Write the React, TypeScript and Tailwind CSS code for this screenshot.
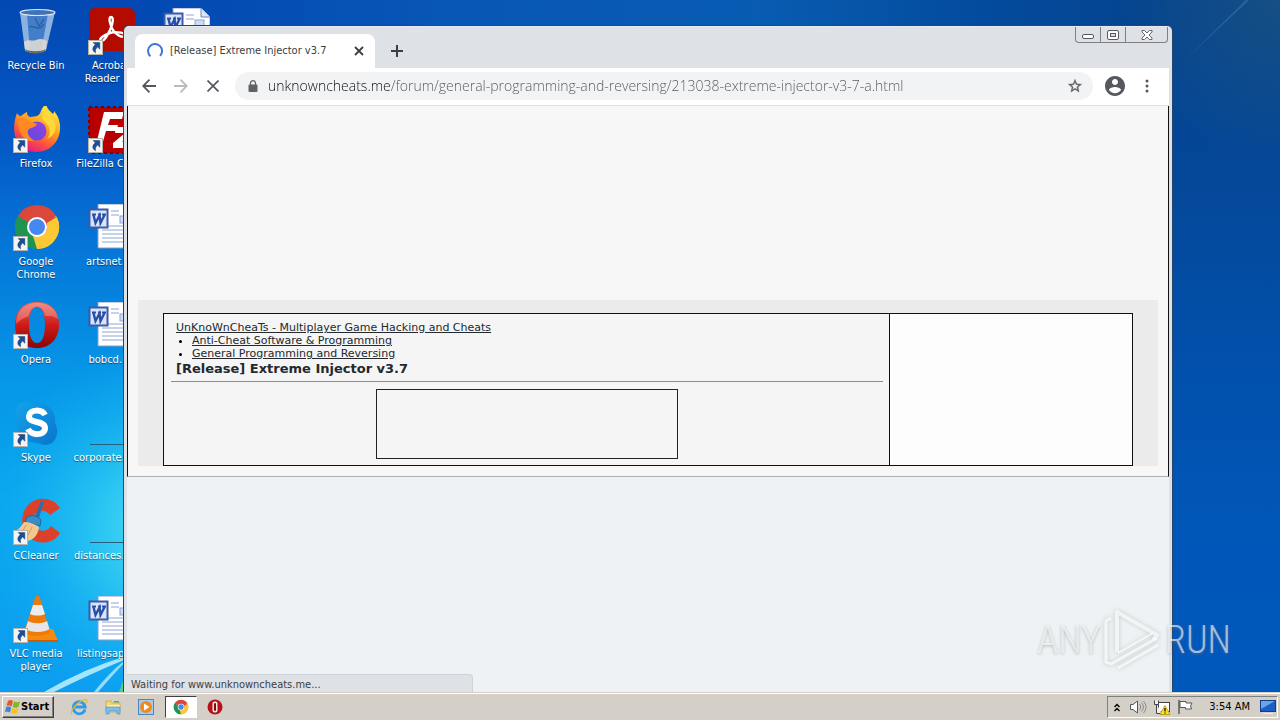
import type { ReactNode } from "react";

function Shortcut() {
  return (
    <g transform="translate(0 32)">
      <rect x=".5" y=".5" width="14" height="14" fill="#f4f4f2" stroke="#b9b2a8" />
      <path d="M5.2 2.6h6.6v6.6L9.7 7.1C7.6 8.6 7 10.3 7.6 12.8 4.4 11.2 3.6 7.6 7.3 4.8Z" fill="#1c4f96" stroke="#123a78" strokeWidth=".5" />
    </g>
  );
}

function Icon({ children, shortcut = true }: { children: ReactNode; shortcut?: boolean }) {
  return (
    <svg viewBox="-1 0 48 48" className="size-12 shrink-0" aria-hidden="true">
      {children}
      {shortcut && <Shortcut />}
    </svg>
  );
}

const Recycle = () => (
  <Icon shortcut={false}>
    <path d="M7 4 12 42c3 4 18 4 21 0L42 4Z" fill="#6f9fd6" fillOpacity=".6" />
    <path d="M7 4 12 42l5 2L14 6Z" fill="#c9def2" fillOpacity=".55" />
    <path d="M42 4 33 42l-5 2L35 6Z" fill="#d8e8f7" fillOpacity=".5" />
    <path d="M16 19c5-3 9 6 15-3M22 10l4 8 5-7" fill="none" stroke="#2c62a8" strokeWidth="1.500" />
    <path d="M11 34c5-4 8 0 12-2s8-1 11 1l-1 9c-3 4-18 4-21 0Z" fill="#dedad4" fillOpacity=".9" />
    <path d="M12 41c5 3 16 3 21 0-2 6-18 6-21 0Z" fill="#6f675c" />
    <ellipse cx="24.500" cy="4.500" rx="17.500" ry="3" fill="#3f73b5" stroke="#dbe7f3" strokeWidth="1.200" />
  </Icon>
);

const Acrobat = () => (
  <Icon>
    <rect x="1" y="0" width="46" height="43" rx="6" fill="#b30b00" />
    <path d="M23 9c-3 0-1 8 2 13s9 8 12 6c3-3-9-5-15-3s-12 6-9 8c3 1 6-5 9-11s4-13 1-13Z" fill="none" stroke="#fff" strokeWidth="2.400" />
  </Icon>
);

const Firefox = () => (
  <Icon>
    <defs>
      <linearGradient id="ff" x1=".8" y1="0" x2=".3" y2="1">
        <stop offset="0" stopColor="#fff44f" /><stop offset=".4" stopColor="#ffab1f" /><stop offset=".7" stopColor="#ff5a36" /><stop offset="1" stopColor="#e31587" />
      </linearGradient>
      <linearGradient id="fp" x1="0" y1="1" x2="1" y2="0"><stop offset="0" stopColor="#5b4de0" /><stop offset="1" stopColor="#9a3fe0" /></linearGradient>
    </defs>
    <g transform="translate(0 -1)">
      <path d="M4 8c1 2 2 3 4 3 2-2 4-3 6-4 0 3 1 4 3 5 6-1 9 0 11-6 1-3 3-5 5-7 1 5 4 7 7 10 1-1 1-2 1-3 8 9 8 23 1 32-9 12-29 12-37 0C-1 28 1 16 4 8Z" fill="url(#ff)" />
      <circle cx="24" cy="26" r="9.500" fill="url(#fp)" />
      <path d="M5 14c5-2 9-1 13 3l6 2c-2 4-6 3-9 6-2 3 2 8 6 11-9 1-17-8-16-22Z" fill="#ff8a22" />
      <path d="M31 16c6 4 8 12 3 18 7-3 10-9 8-16-2-6-7-9-10-14-2 5-4 8-1 12Z" fill="#ffd83a" />
    </g>
  </Icon>
);

const FileZilla = () => (
  <Icon>
    <rect x="1" y="1" width="46" height="46" fill="#b80000" stroke="#7d0000" strokeWidth="2" strokeDasharray="3 3" />
    <path d="M16 6h20l-2 7H22l-2 6h10l-2 6H18l-4 14H8Z" fill="#fff" />
    <path d="M28 21h18v5L34 36h12v6H25v-5l12-10H27Z" fill="#fff" />
  </Icon>
);

function ChromeMark() {
  return (
    <>
      <path d="M24 24 4.900 13A22 22 0 0 1 43.100 13Z" fill="#d9483b" />
      <path d="M24 24 43.100 13A22 22 0 0 1 24 46Z" fill="#fcc934" />
      <path d="M24 24V46A22 22 0 0 1 4.900 13Z" fill="#1e9450" />
      <path d="M24 14H43.600L33 29ZM15 19 4.900 13 24 14Z" fill="#d9483b" />
      <path d="M33 29 24 46 20 33Z" fill="#fcc934" />
      <path d="M43.600 14A22 22 0 0 1 24 46L33.500 28 34 20Z" fill="#fcc934" />
      <circle cx="24" cy="24" r="10" fill="#fff" />
      <circle cx="24" cy="24" r="8" fill="#4688f1" />
    </>
  );
}

const Chrome = () => (
  <Icon><g transform="translate(0 -1)"><ChromeMark /></g></Icon>
);

const Opera = () => (
  <Icon>
    <defs>
      <linearGradient id="op" x1="0" y1="0" x2="0" y2="1"><stop offset="0" stopColor="#f0675a" /><stop offset=".5" stopColor="#cf1a18" /><stop offset="1" stopColor="#8b0505" /></linearGradient>
    </defs>
    <path fillRule="evenodd" d="M24 0C38 0 46 9 46 22.500S38 46 24 46 2 36 2 22.500 10 0 24 0Zm0 5c-5 0-8 7-8 18s3 18 8 18 8-7 8-18-3-18-8-18Z" fill="url(#op)" />
    <path fillRule="evenodd" d="M24 1c13 0 20 7 21 16-6-4-8-3-13-3-1-6-4-9.500-8-9.500S17 8 16 14c-5 2-8 3-13 8C3 9 11 1 24 1Z" fill="#fff" fillOpacity=".25" />
  </Icon>
);

const Skype = () => (
  <Icon>
    <defs><linearGradient id="sk" x1="0" y1="0" x2="1" y2="1"><stop offset="0" stopColor="#12a4ea" /><stop offset="1" stopColor="#0a74cc" /></linearGradient></defs>
    <path d="M3 14C1 4 11-1 18 3c14-3 26 7 24 20 4 7 2 16-3 20-5 3-10 2-14 0C11 43 1 33 4 20Z" fill="url(#sk)" />
    <path d="M32 15c-3-6-15-6-16 1-1 8 16 4 16 12 0 8-14 8-17 1" fill="none" stroke="#fff" strokeWidth="6" />
  </Icon>
);

const CCleaner = () => (
  <Icon>
    <path d="M47 10C40-1 25-2 16 6c-9 9-9 24 0 33 8 8 24 8 31-4l-9-7c-4 6-11 6-15 2-5-5-5-11 0-15 5-4 11-2 14 2Z" fill="#dc4028" />
    <path d="M28 3 31 4 26 20 22 18Z" fill="#2d6fae" />
    <path d="M14 19c5-3 11-1 14 3l-1 6-15-4Z" fill="#3a8cc4" stroke="#1e5b90" strokeWidth=".8" />
    <path d="M11 24c6 0 11 2 15 5-1 9-6 13-12 14-5 0-10-3-14-8 5-3 8-6 11-11Z" fill="#f3c78d" />
    <path d="M13 27c-2 5-5 8-8 11M19 29c-2 5-4 8-7 12" stroke="#d39c5c" fill="none" />
  </Icon>
);

const Vlc = () => (
  <Icon>
    <path d="M13 33H40l5 12H9Z" fill="#f58a0c" />
    <path d="M9 44h36v2H9Z" fill="#c85f00" />
    <path d="M22 2c1-3 4-3 5 0l10 34c-4 5-22 5-26 0Z" fill="#ee7a0a" />
    <path d="M20 9h9l3 9c-4 2-11 2-15 0Z" fill="#ececec" />
    <path d="M15 25c5 3 14 3 19 0l2.500 8c-5 4-19 4-24 0Z" fill="#e6e6e6" />
  </Icon>
);

const Word = () => (
  <Icon shortcut={false}>
    <path d="M10 0H38l9 9V44H10Z" fill="#fff" stroke="#8a9cc8" />
    <path d="M38 0v9h9" fill="#dbe5f6" stroke="#6f86c0" />
    <path d="M23 7h8M23 11h8M14 22h30M14 26h30M14 30h30M14 34h30M14 38h30" stroke="#8ea3d6" />
    <rect x="32" y="12" width="9" height="7" fill="#cfdcf4" stroke="#8ea3d6" />
    <rect x="1.500" y="5.500" width="18" height="18" fill="#d9e4f8" stroke="#3b5ba9" strokeWidth="2" />
    <path d="M4 10.500h4M10 10.500h3M14 10.500h4" stroke="#2b4fa8" strokeWidth="2" />
    <path d="M5.500 11 7.500 19 11.500 11.500 12.500 19 16.500 11" fill="none" stroke="#2b4fa8" strokeWidth="2.400" />
  </Icon>
);

const Blank = () => (
  <Icon shortcut={false}><path d="M2 44.500H47" stroke="#26607f" /></Icon>
);

type Item = { label: string; icon: ReactNode };
const columns: Item[][] = [
  [
    { label: "Recycle Bin", icon: <Recycle /> },
    { label: "Firefox", icon: <Firefox /> },
    { label: "Google Chrome", icon: <Chrome /> },
    { label: "Opera", icon: <Opera /> },
    { label: "Skype", icon: <Skype /> },
    { label: "CCleaner", icon: <CCleaner /> },
    { label: "VLC media player", icon: <Vlc /> },
  ],
  [
    { label: "Acrobat Reader DC", icon: <Acrobat /> },
    { label: "FileZilla Client", icon: <FileZilla /> },
    { label: "artsnet.rtf", icon: <Word /> },
    { label: "bobcd.rtf", icon: <Word /> },
    { label: "corporate.docx", icon: <Blank /> },
    { label: "distances.docx", icon: <Blank /> },
    { label: "listingsapp.rtf", icon: <Word /> },
  ],
  [{ label: "", icon: <Word /> }],
];

function Wallpaper() {
  return (
    <svg className="absolute inset-0 size-full" preserveAspectRatio="none" viewBox="0 0 1280 692" aria-hidden="true">
      <defs>
        <linearGradient id="wl" x1="0" y1="0" x2="0" y2="1">
          <stop offset="0" stopColor="#0348b2" /><stop offset=".2" stopColor="#0458c6" /><stop offset=".36" stopColor="#0577d8" /><stop offset=".55" stopColor="#0697e8" /><stop offset=".72" stopColor="#08a6ee" /><stop offset="1" stopColor="#0c9df0" />
        </linearGradient>
        <radialGradient id="wg" gradientUnits="userSpaceOnUse" cx="170" cy="530" r="190">
          <stop offset="0" stopColor="#5fe8f6" stopOpacity=".95" /><stop offset=".4" stopColor="#35d0f4" stopOpacity=".7" /><stop offset="1" stopColor="#12b0f2" stopOpacity="0" />
        </radialGradient>
        <linearGradient id="wt" x1="0" y1="0" x2="1" y2="0">
          <stop offset="0" stopColor="#0348b2" /><stop offset=".3" stopColor="#0857b6" /><stop offset=".55" stopColor="#085cb2" /><stop offset=".75" stopColor="#034a9c" /><stop offset=".9" stopColor="#05448e" /><stop offset="1" stopColor="#05448e" />
        </linearGradient>
        <linearGradient id="wr" x1="0" y1="0" x2="0" y2="1">
          <stop offset="0" stopColor="#05448e" /><stop offset=".25" stopColor="#04489a" /><stop offset=".5" stopColor="#0250ac" /><stop offset=".8" stopColor="#0057b9" /><stop offset="1" stopColor="#0058bc" />
        </linearGradient>
        <radialGradient id="wc" gradientUnits="userSpaceOnUse" cx="1280" cy="0" r="160">
          <stop offset="0" stopColor="#1b5283" stopOpacity=".8" /><stop offset="1" stopColor="#1b5283" stopOpacity="0" />
        </radialGradient>
      </defs>
      <rect width="1280" height="692" fill="url(#wl)" />
      <rect width="400" height="692" fill="url(#wg)" />
      <rect x="124" width="1156" height="28" fill="url(#wt)" />
      <rect x="1170" y="26" width="110" height="666" fill="url(#wr)" />
      <rect x="1100" width="180" height="180" fill="url(#wc)" />
      <path d="M1185 60 1246 0h3Z" fill="#5f90c0" fillOpacity=".35" />
      <path d="M44 692Q85 668 124 657v3Q90 674 54 692Z" fill="#c9f6ff" fillOpacity=".8" />
      <path d="M94 692Q108 674 124 661v2Q112 676 98 692Z" fill="#c9f6ff" fillOpacity=".7" />
      <path d="M119 692l5-14v14Z" fill="#4fd08a" />
    </svg>
  );
}

const navButton = "flex size-6 items-center justify-center";

function TabStrip() {
  return (
    <div className="flex h-[41px] items-end pl-2">
      <div className="flex h-[34px] w-60 items-center rounded-t-lg bg-white px-3 text-[#3c4043]">
        <svg viewBox="0 0 16 16" className="size-4 shrink-0" aria-hidden="true">
          <path d="M3.500 13.300A7 7 0 1 1 13 12.900" fill="none" stroke="#3c7ad6" strokeWidth="2" />
        </svg>
        <span className="ml-[7px] flex-1 truncate">[Release] Extreme Injector v3.7</span>
        <button aria-label="Close tab">
          <svg viewBox="0 0 8 8" className="size-2 overflow-visible" aria-hidden="true"><path d="M0 0 8 8M8 0 0 8" stroke="#3c4043" strokeWidth="1.800" /></svg>
        </button>
      </div>
      <button aria-label="New tab" className="ml-2.5 flex h-[34px] w-6 items-center justify-center">
        <svg viewBox="0 0 12 12" className="size-3" aria-hidden="true"><path d="M6 0V12M0 6H12" stroke="#3c4043" strokeWidth="2" /></svg>
      </button>
      <div className="mr-px ml-auto flex h-4 self-start rounded-b-sm border border-t-0 border-[#7d8087]">
        <button aria-label="Minimize" className="flex w-6 items-end justify-center pb-[3px]">
          <svg viewBox="0 0 12 5" className="h-[5px] w-3" aria-hidden="true"><rect x=".5" y=".5" width="11" height="4" rx="1.500" fill="#fff" stroke="#55585e" /></svg>
        </button>
        <button aria-label="Maximize" className="flex w-[26px] items-center justify-center border-x border-[#7d8087]">
          <svg viewBox="0 0 12 10" className="h-2.5 w-3" aria-hidden="true"><rect x=".5" y=".5" width="11" height="9" rx="1.500" fill="#fff" stroke="#55585e" /><rect x="3.500" y="3.500" width="5" height="3" fill="#dee1e6" stroke="#55585e" /></svg>
        </button>
        <button aria-label="Close" className="flex w-[41px] items-center justify-center">
          <svg viewBox="0 0 12 10" className="h-2.5 w-3" aria-hidden="true"><path d="M1 .5h2.500L6 3 8.500.500H11V2L8 5l3 3v1.500H8.500L6 7 3.500 9.500H1V8l3-3-3-3Z" fill="#fff" stroke="#55585e" strokeWidth=".9" /></svg>
        </button>
      </div>
    </div>
  );
}

function Toolbar() {
  return (
    <div className="flex h-[38px] items-center border-b border-[#dcdee0] bg-white px-2.5 pb-px">
      <div className="flex gap-2">
        <button aria-label="Back" className={navButton}>
          <svg viewBox="0 0 14 14" className="size-3.5" fill="none" stroke="#54575b" strokeWidth="1.800" aria-hidden="true"><path d="M14 7H1.500M7.500.700 1.200 7l6.300 6.300" /></svg>
        </button>
        <button aria-label="Forward" disabled className={navButton}>
          <svg viewBox="0 0 14 14" className="size-3.5" fill="none" stroke="#b9bbbe" strokeWidth="1.800" aria-hidden="true"><path d="M0 7H12.500M6.500.700 12.800 7 6.500 13.300" /></svg>
        </button>
        <button aria-label="Stop" className={navButton}>
          <svg viewBox="0 0 12 12" className="size-3" stroke="#54575b" strokeWidth="1.700" aria-hidden="true"><path d="M.500.500l11 11M11.500.500l-11 11" /></svg>
        </button>
      </div>
      <div className="ml-2.5 flex h-7 min-w-0 flex-1 items-center rounded-full bg-[#f1f3f4] px-3">
        <svg viewBox="0 0 10 12" className="ml-px h-3 w-2.5 shrink-0" aria-hidden="true">
          <path d="M2.500 5V3.200a2.500 2.500 0 0 1 5 0V5" fill="none" stroke="#5f6368" strokeWidth="1.300" /><rect x=".5" y="4.500" width="9" height="7.500" rx="1" fill="#5f6368" />
        </svg>
        <input
          aria-label="Address"
          defaultValue="unknowncheats.me/forum/general-programming-and-reversing/213038-extreme-injector-v3-7-a.html"
          className="ml-2.5 min-w-0 flex-1 bg-[linear-gradient(to_right,#101114_122px,#55595e_122px)] bg-clip-text pb-px font-['Open_Sans',sans-serif] text-[14px] leading-5 font-light text-transparent outline-none"
        />
        <button aria-label="Bookmark" className="-mr-1 flex size-5 items-center justify-center">
          <svg viewBox="0 0 24 24" className="size-4" aria-hidden="true"><path d="M22 9.240l-7.190-.620L12 2 9.190 8.630 2 9.240l5.460 4.730L5.820 21 12 17.270 18.180 21l-1.630-7.030L22 9.240zM12 15.400l-3.760 2.270 1-4.280-3.320-2.880 4.380-.380L12 6.100l1.710 4.040 4.380.380-3.320 2.880 1 4.280L12 15.400z" fill="#5f6368" stroke="#5f6368" strokeWidth=".6" /></svg>
        </button>
      </div>
      <button aria-label="Profile" className="ml-2.5 flex size-6 items-center justify-center">
        <svg viewBox="2 2 20 20" className="size-5" aria-hidden="true"><path d="M12 2C6.480 2 2 6.480 2 12s4.480 10 10 10 10-4.480 10-10S17.520 2 12 2zm0 3c1.660 0 3 1.340 3 3s-1.340 3-3 3-3-1.340-3-3 1.340-3 3-3zm0 14.200c-2.500 0-4.710-1.280-6-3.220.030-1.990 4-3.080 6-3.080 1.990 0 5.970 1.090 6 3.080-1.290 1.940-3.500 3.220-6 3.220z" fill="#55585d" /></svg>
      </button>
      <button aria-label="Menu" className="ml-2 flex size-6 items-center justify-center">
        <svg viewBox="0 0 4 14" className="h-3.5 w-1" fill="#55585d" aria-hidden="true"><circle cx="2" cy="2" r="1.500" /><circle cx="2" cy="7" r="1.500" /><circle cx="2" cy="12" r="1.500" /></svg>
      </button>
    </div>
  );
}

function ForumPage() {
  return (
    <main className="flex-1 bg-[#eef2f4] font-['DejaVu_Sans',sans-serif] text-[#22292f]">
      <div className="border-x border-b border-x-[#111] border-b-[#adb0b2] bg-[#f7f7f7] px-2.5 pt-[194px] pb-2.5">
        <div className="bg-[#ebebeb] px-[25px] pt-[13px]">
          <div className="flex border border-[#111]">
            <div className="min-w-0 flex-1 bg-[#f5f5f5] p-[7px] pb-1.5 pr-1.5">
              <nav className="px-[5px] text-[11px] leading-[13px]">
                <a href="#home" className="underline">UnKnoWnCheaTs - Multiplayer Game Hacking and Cheats</a>
                <ul className="list-disc pl-4 marker:text-black">
                  <li><a href="#anti-cheat" className="underline">Anti-Cheat Software &amp; Programming</a></li>
                  <li><a href="#general" className="underline">General Programming and Reversing</a></li>
                </ul>
              </nav>
              <h1 className="px-[5px] text-[13px] leading-[17px] font-bold">[Release] Extreme Injector v3.7</h1>
              <hr className="mt-1 border-[#8d8d8d]" />
              <div className="mx-auto mt-[7px] h-[70px] w-[302px] border border-[#222]" />
            </div>
            <div className="w-[243px] border-l border-[#111] bg-[#fdfdfd]" />
          </div>
        </div>
      </div>
    </main>
  );
}

function BrowserWindow() {
  return (
    <section className="absolute top-[26px] right-[108px] bottom-0 left-[124px] flex flex-col overflow-hidden rounded-t-[5px] border-t border-[#e8ecf2] bg-[#dee1e6] px-[3px] shadow-[0_0_0_1px_#23466e]">
      <TabStrip />
      <Toolbar />
      <ForumPage />
      <div role="status" className="absolute bottom-0 left-[3px] h-[18px] w-[346px] rounded-tr border-t border-r border-[#cfd3d8] bg-[#dee1e6] px-1 leading-[20px] text-[#3c4043]">
        Waiting for www.unknowncheats.me...
      </div>
    </section>
  );
}

function Watermark() {
  const word = "font-['Roboto_Condensed','Liberation_Sans_Narrow','Open_Sans_Condensed',sans-serif] text-[38px] leading-[64px] font-light text-white/60 [text-shadow:0_1px_3px_rgb(120_125_130/0.5)]";
  return (
    <div className="pointer-events-none absolute right-[49px] bottom-5 flex h-[64px] items-center">
      <span className={word}>ANY</span>
      <svg viewBox="0 0 64 64" className="size-16 drop-shadow-[0_0_2px_rgb(120_125_130/0.5)]" fill="none" stroke="#fff" strokeOpacity=".7" strokeWidth="4" aria-hidden="true">
        <path d="M16 44V4L56 27 52 32" strokeLinejoin="round" />
        <path d="M17 45 52 25" strokeWidth="2" />
        <path d="M10 10 5 13V54L10 56 56 30M17 60 57 37" strokeLinejoin="round" strokeWidth="3" />
      </svg>
      <span className={word}>RUN</span>
    </div>
  );
}

function Taskbar() {
  return (
    <footer className="relative flex h-7 items-center border-t border-[#d4d0c8] bg-[#d4d0c8] px-0.5 pt-px text-black shadow-[inset_0_1px_0_#fff]">
      <button className="flex h-[22px] w-[52px] items-center border border-t-white border-r-[#404040] border-b-[#404040] border-l-white pl-0.5 font-bold shadow-[inset_-1px_-1px_0_#808080]">
        <svg viewBox="0 0 16 16" className="size-4 shrink-0" aria-hidden="true">
          <path d="M3 2c2-1.500 3.500-1 5 0L6.500 7.500C5 6.500 3.500 6.300 1.500 7Z" fill="#e8562a" />
          <path d="M9 2.500c2 1 4 1 6 0L13.500 8c-2 1-4 .800-6-.300Z" fill="#7db928" />
          <path d="M1.200 8c2-.800 3.500-.500 5 .500L5 13.500C3.500 12.500 2 12.500 0 13Z" fill="#3f86d8" />
          <path d="M7.200 9c2 1 4 1 6 0L12 14c-2 1-4 1-6 0Z" fill="#f8c11c" />
        </svg>
        Start
      </button>
      <div className="ml-4 flex items-center gap-4">
        <button aria-label="Internet Explorer">
          <svg viewBox="0 0 18 18" className="size-[18px]" fill="none" aria-hidden="true">
            <path d="M15 11.500A6 6 0 1 1 15.200 9H5" stroke="#2f9be6" strokeWidth="2.800" />
            <path d="M2 16C-1 12 12 0 16.500 2c1 .800.500 2-.500 3.500" stroke="#e9b72c" strokeWidth="1.300" />
          </svg>
        </button>
        <button aria-label="Explorer">
          <svg viewBox="0 0 18 18" className="size-[18px]" aria-hidden="true">
            <path d="M2 3h5l1 2h8v9H2Z" fill="#f2d577" stroke="#cfa63a" strokeWidth=".8" /><path d="M3 7h13v3H3Z" fill="#fbefb9" />
            <path d="M2 9h14v7h-3v-3H5v3H2Z" fill="#7cc0e8" stroke="#4d95c8" strokeWidth=".7" /><path d="M10 3h5v1.500h-5Z" fill="#5fae3c" />
          </svg>
        </button>
        <button aria-label="Media Player">
          <svg viewBox="0 0 16 16" className="size-4" aria-hidden="true">
            <rect x=".5" y=".5" width="15" height="15" fill="#a9cbea" stroke="#4a87bf" /><circle cx="8" cy="8" r="6" fill="#f08a1c" /><path d="M6 4.500 11.500 8 6 11.500Z" fill="#fff" />
          </svg>
        </button>
      </div>
      <button aria-label="Chrome" className="ml-[11px] flex h-[22px] w-8 items-center justify-center border border-t-[#404040] border-r-white border-b-white border-l-[#404040] bg-white">
        <svg viewBox="0 0 48 48" className="size-4" aria-hidden="true"><ChromeMark /></svg>
      </button>
      <button aria-label="Opera" className="ml-2.5">
        <svg viewBox="0 0 16 16" className="size-4" aria-hidden="true"><circle cx="8" cy="8" r="7.500" fill="#b5121b" /><rect x="5.500" y="2.500" width="5" height="11" rx="2" fill="#f3e6e4" /><rect x="7" y="4" width="2" height="8" rx="1" fill="#7c0b10" /></svg>
      </button>
      <div className="ml-auto flex h-[22px] items-center border border-t-[#808080] border-r-white border-b-white border-l-[#808080] pr-px pl-[5px]">
        <button aria-label="Show hidden icons"><svg viewBox="0 0 8 9" className="h-[9px] w-2" fill="none" stroke="#000" strokeWidth="1.400" aria-hidden="true"><path d="M1.500 4 4 1.500 6.500 4M1.500 8 4 5.500 6.500 8" /></svg></button>
        <svg viewBox="0 0 18 16" className="ml-2 h-4 w-[18px]" fill="none" stroke="#55585c" aria-hidden="true"><path d="M1.500 5.500H4L8.500 2V14L4 10.500H1.500Z" fill="#fff" /><path d="M10.500 5c1.500 2 1.500 4 0 6M12.500 3.500c2.500 3 2.500 6 0 9M14.500 2c3.300 4 3.300 8 0 12" stroke="#85888c" /></svg>
        <svg viewBox="0 0 18 16" className="ml-1.5 h-4 w-[18px]" aria-hidden="true"><rect x="5.500" y="3.500" width="11" height="9" fill="#fff" stroke="#444" /><path d="M1.500 1.500v4h4v-4M3.500 5.500V14.500H9" fill="#eee" stroke="#444" /><path d="M12 6.500 17 15.500H7Z" fill="#ffdf2b" stroke="#b89400" strokeWidth=".8" /><path d="M12 9v3.500M12 13.500v1" stroke="#000" strokeWidth="1.200" /></svg>
        <svg viewBox="0 0 16 16" className="ml-1.5 size-4" aria-hidden="true"><path d="M2 1V15" stroke="#55585c" strokeWidth="1.500" /><path d="M3 2.500h6v1.500h6L13.500 7l1 3H8.500V8.500H3Z" fill="#fff" stroke="#55585c" /></svg>
        <time className="ml-4 leading-4">3:54 AM</time>
        <svg viewBox="0 0 16 14" className="ml-2.5 h-3.5 w-4" aria-hidden="true"><rect x=".5" y=".5" width="15" height="11" fill="#1c5fc4" stroke="#123e86" /><path d="M1 1h14L1 9Z" fill="#6aa5ec" /><path d="M3 13.500h10" stroke="#e8ecf4" /></svg>
      </div>
    </footer>
  );
}

export default function App() {
  return (
    <div className="flex min-h-screen flex-col font-['DejaVu_Sans_Condensed','DejaVu_Sans',sans-serif] text-[11px]">
      <div className="relative flex-1 overflow-hidden">
        <Wallpaper />
        <div className="relative flex gap-[3px]">
          {columns.map((items, c) => (
            <div key={c} className="flex w-[72px] flex-col">
              {items.map((item, i) => (
                <div key={i} className="flex h-[98px] flex-col items-center gap-[3px] pt-2 text-center leading-[13px] text-white">
                  {item.icon}
                  <span className="[text-shadow:0_1px_1px_rgb(0_0_0/0.5)]">{item.label}</span>
                </div>
              ))}
            </div>
          ))}
        </div>
        <BrowserWindow />
        <Watermark />
      </div>
      <Taskbar />
    </div>
  );
}
